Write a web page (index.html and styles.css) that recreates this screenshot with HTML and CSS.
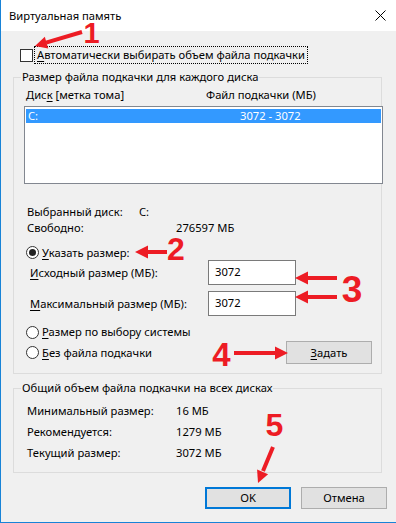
FILE: index.html
```html
<!DOCTYPE html>
<html lang="ru">
<head>
  <meta charset="utf-8">
  <title>Виртуальная память</title>
  <link rel="stylesheet" href="styles.css">
</head>
<body>
  <div class="window">
    <div class="titlebar">
      <span class="title">Виртуальная память</span>
      <svg class="close" width="11" height="11" viewBox="0 0 11 11">
        <path d="M0.5 0.5 L10.5 10.5 M10.5 0.5 L0.5 10.5" stroke="#000" stroke-width="1"/>
      </svg>
    </div>
    <div class="content">
      <label class="auto">
        <span class="check"></span>
        <span class="focus"><u>А</u>втоматически выбирать объем файла подкачки</span>
      </label>

      <fieldset class="group group-disk">
        <legend>Размер файла подкачки для каждого диска</legend>
        <div class="cols">
          <span class="col-disk">Дис<u>к</u> [метка тома]</span>
          <span>Файл подкачки (МБ)</span>
        </div>
        <div class="listbox">
          <div class="list-row selected">
            <span class="col-disk">C:</span>
            <span class="col-size">3072 - 3072</span>
          </div>
        </div>
        <div class="info first">
          <span class="key short">Выбранный диск:</span>
          <span>C:</span>
        </div>
        <div class="info">
          <span class="key">Свободно:</span>
          <span>276597 МБ</span>
        </div>
        <label class="radio-row custom">
          <span class="radio checked"></span>
          <span><u>У</u>казать размер:</span>
        </label>
        <div class="size-row">
          <span class="size-label"><u>И</u>сходный размер (МБ):</span>
          <span class="textbox">3072</span>
        </div>
        <div class="size-row second">
          <span class="size-label"><u>М</u>аксимальный размер (МБ):</span>
          <span class="textbox">3072</span>
        </div>
        <label class="radio-row system">
          <span class="radio"></span>
          <span><u>Р</u>азмер по выбору системы</span>
        </label>
        <div class="radio-row none">
          <span class="radio"></span>
          <span><u>Б</u>ез файла подкачки</span>
          <button class="btn set"><u>З</u>адать</button>
        </div>
      </fieldset>

      <fieldset class="group group-total">
        <legend>Общий объем файла подкачки на всех дисках</legend>
        <div class="totals">
          <div class="info"><span class="key">Минимальный размер:</span><span>16 МБ</span></div>
          <div class="info"><span class="key">Рекомендуется:</span><span>1279 МБ</span></div>
          <div class="info"><span class="key">Текущий размер:</span><span>3072 МБ</span></div>
        </div>
      </fieldset>

      <div class="actions">
        <button class="btn default">OK</button>
        <button class="btn">Отмена</button>
      </div>
    </div>

    <!-- red annotation arrows drawn over the dialog -->
    <svg class="notes" width="396" height="523" viewBox="0 0 396 523">
      <g fill="#ed1c24" stroke="none">
        <line x1="82" y1="32" x2="46" y2="42.6" stroke="#ed1c24" stroke-width="4"/>
        <polygon points="35,46 48.2,48.4 44.8,36.8"/>
        <text x="91.5" y="43" font-size="29" text-anchor="middle">1</text>

        <line x1="167" y1="252" x2="145" y2="252" stroke="#ed1c24" stroke-width="4"/>
        <polygon points="135,252 148,245.5 148,258.5"/>
        <text x="176" y="260" font-size="32" text-anchor="middle">2</text>

        <line x1="337" y1="278" x2="305" y2="278" stroke="#ed1c24" stroke-width="4"/>
        <polygon points="295,278 308,271.5 308,284.5"/>
        <line x1="337" y1="297" x2="305" y2="297" stroke="#ed1c24" stroke-width="4"/>
        <polygon points="295,297 308,290.5 308,303.5"/>
        <text x="352" y="302" font-size="37" text-anchor="middle">3</text>

        <line x1="234" y1="353" x2="278" y2="353" stroke="#ed1c24" stroke-width="4"/>
        <polygon points="288,353 275,346.5 275,359.5"/>
        <text x="221.5" y="366" font-size="33" text-anchor="middle">4</text>

        <line x1="273" y1="447" x2="263" y2="471" stroke="#ed1c24" stroke-width="4"/>
        <polygon points="258,483 268.1,474.2 257.1,469.6"/>
        <text x="274.5" y="436" font-size="32" text-anchor="middle">5</text>
      </g>
    </svg>
  </div>
</body>
</html>
```

FILE: styles.css
```css
html, body {
  margin: 0;
  padding: 0;
}
body {
  font-family: "Noto Sans", sans-serif;
  font-size: 11.2px;
  color: #000;
  background: #f0f0f0;
}
u {
  text-decoration-thickness: 1px;
  text-underline-offset: 2px;
}
.window {
  position: relative;
  width: 396px;
  height: 523px;
  box-sizing: border-box;
  border-left: 1px solid #1883d7;
  border-bottom: 1px solid #1883d7;
  background: #f0f0f0;
  overflow: hidden;
}
.titlebar {
  height: 31px;
  background: #fff;
  display: flex;
  align-items: center;
  padding-left: 8px;
  padding-right: 10px;
}
.title {
  flex: 1;
  line-height: 16px;
}
.close {
  display: block;
}
.content {
  padding-left: 12px;
}
.auto {
  display: flex;
  align-items: center;
  height: 18px;
  margin-top: 15px;
  padding-left: 7px;
}
.check {
  width: 11px;
  height: 11px;
  border: 1px solid #333;
  background: #fff;
  margin-right: 2px;
}
.focus {
  outline: 1px dotted #000;
  padding: 1px 2px 1px 2px;
  line-height: 14px;
}
.group {
  width: 369px;
  box-sizing: border-box;
  margin: 5px 0 0 0;
  padding: 0;
  border: 1px solid #dcdcdc;
  min-width: 0;
}
.group legend {
  padding: 0 1px;
  margin-left: 7px;
  line-height: 16px;
}
.group-disk {
  padding-bottom: 9px;
}
.cols {
  display: flex;
  line-height: 16px;
  margin-top: 2px;
  padding-left: 12px;
}
.cols .col-disk {
  width: 180px;
}
.listbox {
  width: 359px;
  height: 78px;
  box-sizing: border-box;
  margin: 3px 0 0 10px;
  border: 1px solid #828790;
  background: #fff;
  padding: 2px 1px 0 1px;
}
.list-row {
  display: flex;
  height: 14px;
  line-height: 14px;
  padding-left: 2px;
}
.list-row.selected {
  background: #3399ff;
  color: #fff;
}
.list-row .col-disk {
  width: 212px;
}
.info {
  display: flex;
  line-height: 16px;
  padding-left: 13px;
}
.info.first {
  margin-top: 20px;
}
.info .key {
  width: 149px;
}
.info .key.short {
  width: 112px;
}
.radio-row {
  display: flex;
  align-items: center;
  padding-left: 12px;
  line-height: 16px;
}
.radio {
  width: 11px;
  height: 11px;
  border: 1px solid #333;
  border-radius: 50%;
  background: #fff;
  margin-right: 3px;
  display: flex;
  align-items: center;
  justify-content: center;
}
.radio.checked::after {
  content: "";
  width: 7px;
  height: 7px;
  border-radius: 50%;
  background: #222;
}
.radio-row.custom {
  margin-top: 9px;
  height: 15px;
}
.size-row {
  display: flex;
  align-items: center;
  height: 25px;
  padding-left: 16px;
}
.size-row.second {
  margin-top: 6px;
}
.size-label {
  width: 178px;
}
.textbox {
  width: 88px;
  height: 25px;
  box-sizing: border-box;
  border: 1px solid #7a7a7a;
  background: #fff;
  padding: 3px 6px;
  line-height: 16px;
}
.radio-row.system {
  margin-top: 8px;
}
.radio-row.none {
  margin-top: 1px;
  height: 23px;
}
.btn {
  font-family: inherit;
  font-size: 11.2px;
  color: #000;
  background: #e1e1e1;
  border: 1px solid #adadad;
  height: 22px;
  padding: 0;
  line-height: 18px;
  box-sizing: border-box;
}
.btn.set {
  margin-left: auto;
  margin-right: 9px;
  width: 86px;
  height: 23px;
}
.group-total {
  margin-top: 6px;
  padding-bottom: 9px;
}
.totals {
  margin-top: 4px;
}
.totals .info {
  line-height: 21px;
}
.actions {
  display: flex;
  justify-content: flex-end;
  gap: 10px;
  margin-top: 14px;
  padding-right: 9px;
}
.actions .btn {
  width: 86px;
}
.btn.default {
  border: 2px solid #0078d7;
}
.notes {
  position: absolute;
  left: -1px;
  top: 0;
  pointer-events: none;
  font-family: "Liberation Sans", Arial, sans-serif;
  font-weight: bold;
}
```
